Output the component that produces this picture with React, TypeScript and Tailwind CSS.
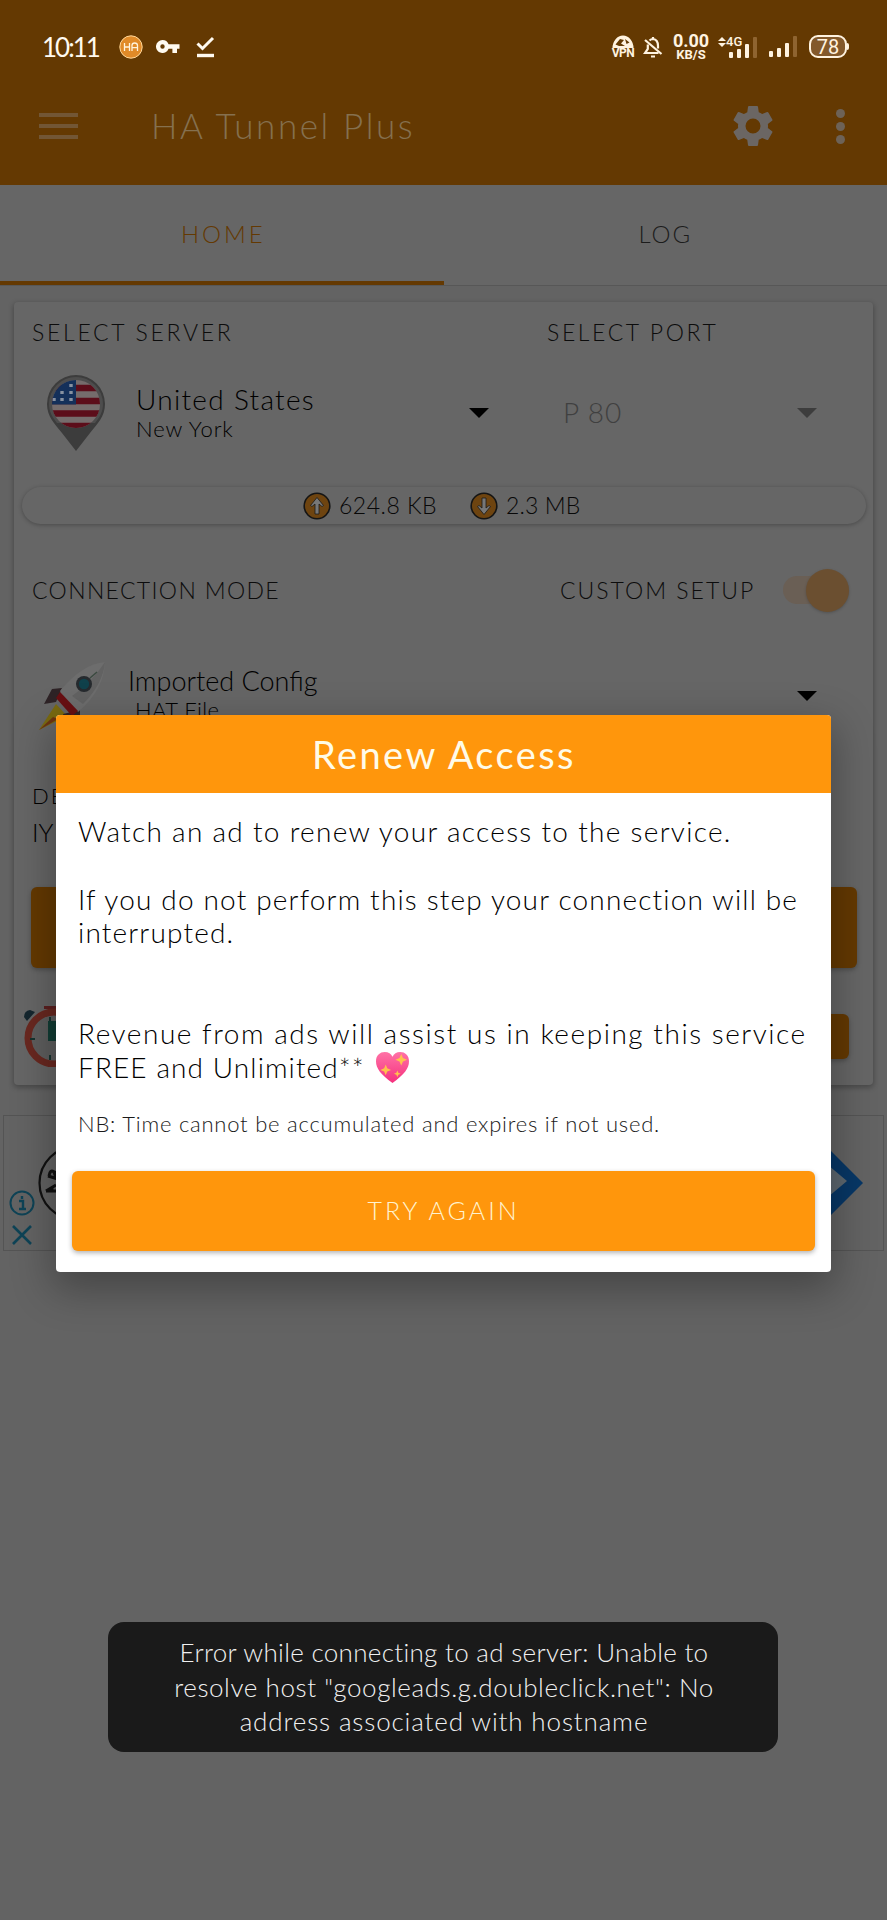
import type { ReactNode } from "react";

function Caret({ className }: { className: string }) {
  return (
    <svg viewBox="0 0 20 10" className={`h-[10px] w-5 ${className}`} fill="currentColor">
      <path d="M0 0h20L10 10z" />
    </svg>
  );
}

function AppBadge() {
  return (
    <svg viewBox="0 0 24 24" className="size-6">
      <circle cx="12" cy="12" r="11.2" fill="#e08a28" stroke="#ffd79a" strokeWidth="1" />
      <path d="M5.500 8v8M10.500 8v8M5.500 12h5M13 16v-5.500q0-2.500 2.700-2.500t2.800 2.500V16M13 12.600h5.500" stroke="#fff3dc" strokeWidth="1.300" fill="none" />
    </svg>
  );
}

function KeyIcon() {
  return (
    <svg viewBox="0 0 24 13" className="h-[13px] w-6" fill="#fffaf0">
      <path fillRule="evenodd" d="M6.500 0a6.500 6.500 0 0 1 6.100 4.300H23.500v4.400H21V13h-4.600V8.700h-3.800A6.500 6.500 0 1 1 6.500 0zm0 4.300a2.200 2.200 0 1 0 0 4.400 2.200 2.200 0 0 0 0-4.400z" />
    </svg>
  );
}

function DoneIcon() {
  return (
    <svg viewBox="0 0 20 22" className="h-[22px] w-5" fill="none" stroke="#fffaf0" strokeWidth="3">
      <path d="M1.500 7.500l5 5L17 2" />
      <path d="M1 19.500h17" strokeWidth="3.400" />
    </svg>
  );
}

function VpnIcon() {
  return (
    <div className="flex w-6 flex-col items-center">
      <svg viewBox="0 0 24 13" className="h-[13px] w-6">
        <path d="M1.500 13a10.500 12.500 0 0 1 21 0" fill="#fff3e0" />
        <path d="M4.500 9.500l4.500-5.500 4 1-3 3.500 4 2.500h-6zM14 4l4.500 3.500-3 1.500z" fill="#643a02" />
      </svg>
      <span className="text-[12px] leading-[11px] font-bold tracking-[-0.500px]">VPN</span>
    </div>
  );
}

function BellOffIcon() {
  return (
    <svg viewBox="0 0 20 22" className="h-[22px] w-5" fill="none" stroke="#fff3e0" strokeWidth="2.200">
      <path d="M6.500 4.500Q8 3 10 3q5 .500 5 7v2.500M4.800 8.500V13L2 17h13.500" />
      <path d="M2 4l16.500 14" />
      <path d="M8 20.500h4M10 1v2" />
    </svg>
  );
}

function Bars({ className }: { className: string }) {
  return (
    <svg viewBox="0 0 28 21" className={className} fill="#fff3e0">
      <rect x="0" y="15" width="4" height="6" rx="1" />
      <rect x="8" y="12" width="4" height="9" rx="1" />
      <rect x="16" y="7" width="4" height="14" rx="1" />
      <rect x="24" y="0" width="4" height="21" rx="1" fill="#8f6430" />
    </svg>
  );
}

function GearIcon() {
  return (
    <svg viewBox="0 0 24 24" className="size-[50px]" fill="#6b6663">
      <path d="M19.140 12.940c.040-.300.060-.610.060-.940 0-.320-.020-.640-.070-.940l2.030-1.580a.49.49 0 0 0 .120-.610l-1.920-3.320a.488.488 0 0 0-.590-.220l-2.390.960c-.500-.380-1.030-.700-1.620-.940l-.360-2.540a.484.484 0 0 0-.480-.410h-3.840c-.240 0-.430.170-.470.410l-.360 2.540c-.590.240-1.130.570-1.620.940l-2.390-.960c-.220-.080-.470 0-.590.220L2.740 8.870c-.120.210-.080.470.120.610l2.030 1.580c-.050.300-.090.630-.090.940s.020.640.070.940l-2.030 1.580a.49.49 0 0 0-.120.610l1.920 3.320c.120.220.370.290.590.220l2.390-.960c.500.380 1.030.700 1.620.940l.360 2.540c.050.240.240.410.480.410h3.840c.240 0 .440-.170.470-.410l.360-2.540c.590-.240 1.130-.560 1.620-.940l2.390.960c.220.080.470 0 .590-.220l1.920-3.320c.120-.220.070-.470-.120-.610l-2.010-1.580zM12 15.600A3.600 3.600 0 1 1 12 8.400a3.600 3.600 0 0 1 0 7.200z" />
    </svg>
  );
}

function FlagPin() {
  return (
    <svg viewBox="0 0 60 78" className="h-[78px] w-[60px]">
      <defs>
        <clipPath id="flag-disc">
          <circle cx="30" cy="30" r="24" />
        </clipPath>
      </defs>
      <path d="M30 1a29 29 0 0 1 29 29c0 13-8 20-15 29L30 77 16 59C9 50 1 43 1 30A29 29 0 0 1 30 1z" fill="#3c3c3c" />
      <path d="M30 3a27 27 0 0 1 27 27c0 8-4 14-8 19H11C7 44 3 38 3 30A27 27 0 0 1 30 3z" fill="#4d4d4d" />
      <g clipPath="url(#flag-disc)">
        <rect width="60" height="60" fill="#756c6c" />
        <path d="M0 14h60M0 27h60M0 39.500h60M0 52h60" stroke="#5c0d1a" strokeWidth="6.500" />
        <rect width="30" height="30.500" fill="#14305a" />
        <path d="M25 10v3M16 17v3M25 17v3M8 24v3M16 24v3M25 24v3" stroke="#8791a0" strokeWidth="3.400" />
      </g>
    </svg>
  );
}

function TransferIcon({ down = false }: { down?: boolean }) {
  return (
    <svg viewBox="0 0 28 28" className={down ? "size-7 rotate-180" : "size-7"}>
      <circle cx="14" cy="14" r="12.800" fill="#6e4410" stroke="#151515" strokeWidth="1.600" />
      <path d="M14 5.500l6.500 8-1.500 1-3-2.500v10h-4V12l-3 2.500-1.500-1z" fill="#777" stroke="#1a1a1a" strokeWidth="0.800" />
    </svg>
  );
}

function Rocket() {
  return (
    <svg viewBox="0 0 70 72" className="h-[72px] w-[70px]">
      <path d="M18 44L1 70l28-14z" fill="#7a6a10" />
      <path d="M1 70l14-13 5 2z" fill="#6e3412" />
      <path d="M24 28L14 29 6 44l12-2zM42 50v9l-15 1-2-6z" fill="#2e2326" />
      <path d="M67 2Q44 4 22 31l18 21Q66 30 67 2z" fill="#6d6d6d" />
      <path d="M67 2q-2 22-22 42L34 36Q54 22 67 2z" fill="#626262" />
      <path d="M22 32l-4 6 16 18 6-5z" fill="#680f12" />
      <circle cx="46" cy="24" r="8" fill="#262a2e" />
      <circle cx="46" cy="24" r="5.200" fill="#10414b" />
      <path d="M52 18l7-6" stroke="#3b4a40" strokeWidth="1.500" />
    </svg>
  );
}

function Stopwatch() {
  return (
    <svg viewBox="0 0 66 62" className="h-[62px] w-[66px]">
      <path d="M2 12q0-6 6-7l5 2-8 9z" fill="#14262e" />
      <path d="M22 1h20v3H22zM30 3h5v5h-5z" fill="#5c2020" />
      <circle cx="32" cy="33" r="26" fill="#5e5e5e" stroke="#692820" strokeWidth="7" />
      <path d="M28 12v5M8 34h5M28 50v5" stroke="#17332f" strokeWidth="2" />
      <path d="M26 16h14v20H26z" fill="#123d35" />
    </svg>
  );
}

function SparkHeart() {
  return (
    <svg viewBox="0 0 36 34" className="h-[33px] w-[35px]">
      <defs>
        <linearGradient id="heart-fill" x1="0" y1="0" x2="0" y2="1">
          <stop offset="0" stopColor="#ff72a6" />
          <stop offset="1" stopColor="#f5307e" />
        </linearGradient>
      </defs>
      <path d="M18 33C6 24 1 18 1 10.500 1 4.500 5 1 10 1c4 0 6.500 2 8 5 1.500-3 4-5 8-5 5 0 9 3.500 9 9.500C35 18 30 24 18 33z" fill="url(#heart-fill)" />
      <path d="M27 3l1.800 4.200L33 9l-4.200 1.800L27 15l-1.800-4.200L21 9l4.200-1.800zM11 14l1.600 3.900 3.900 1.600-3.900 1.600L11 25l-1.600-3.900-3.900-1.600 3.900-1.600zM23 20l1 2.500 2.500 1-2.500 1-1 2.500-1-2.500-2.500-1 2.500-1z" fill="#ffc04d" />
    </svg>
  );
}

function Label({ children, className }: { children: ReactNode; className: string }) {
  return <span className={`text-[23px] leading-7 whitespace-nowrap text-[#0c0c0c] ${className}`}>{children}</span>;
}

function Header() {
  return (
    <header className="h-[185px] bg-[#643902]">
      <div className="flex h-[93px] items-center justify-between pr-[38px] pl-[42px]">
        <div className="flex items-center">
          <span className="w-[77px] text-[26px] leading-none font-normal tracking-[-2px] text-[#fffaf0]">10:11</span>
          <AppBadge />
          <div className="ml-[13px]">
            <KeyIcon />
          </div>
          <div className="ml-4">
            <DoneIcon />
          </div>
        </div>
        <div className="flex items-center font-[Roboto] text-[#fff3e0]">
          <VpnIcon />
          <div className="ml-2">
            <BellOffIcon />
          </div>
          <div className="ml-[9px] flex w-[38px] flex-col items-center font-bold">
            <span className="text-[18px] leading-[15px]">0.00</span>
            <span className="text-[13px] leading-[13px]">KB/S</span>
          </div>
          <div className="ml-2 flex h-[22px] w-[39px] items-start">
            <svg viewBox="0 0 8 10" className="mt-[1px] h-[10px] w-2 shrink-0" fill="#fff3e0">
              <path d="M4 0l4 4H0zM4 10l4-4H0z" />
            </svg>
            <span className="-mt-[1px] w-[3px] shrink-0 text-[13px] leading-[13px] font-medium">4G</span>
            <Bars className="mt-[1px] h-[21px] w-7 shrink-0" />
          </div>
          <Bars className="ml-3 h-[21px] w-[28px]" />
          <div className="ml-3 flex items-center">
            <span className="flex h-[23px] w-[38px] items-center justify-center rounded-[9px] border-2 border-[#fff3e0] bg-[#83592b] text-[20px] leading-none font-normal">
              78
            </span>
            <span className="h-[7px] w-[2px] rounded-r-sm bg-[#fff3e0]" />
          </div>
        </div>
      </div>
      <div className="flex h-[66px] items-center pr-[42px] pl-[39px]">
        <div className="flex w-[39px] flex-col gap-[7px]">
          <span className="h-1 bg-[#725635]" />
          <span className="h-1 bg-[#725635]" />
          <span className="h-1 bg-[#725635]" />
        </div>
        <h1 className="ml-[73px] flex-1 pb-[1px] text-[35px] leading-none tracking-[2.600px] whitespace-nowrap text-[#85704f]">HA Tunnel Plus</h1>
        <GearIcon />
        <div className="ml-[58px] flex flex-col gap-[4px]">
          <span className="size-[9px] rounded-full bg-[#6d6257]" />
          <span className="size-[9px] rounded-full bg-[#6d6257]" />
          <span className="size-[9px] rounded-full bg-[#6d6257]" />
        </div>
      </div>
    </header>
  );
}

function Tabs() {
  return (
    <nav className="grid h-[101px] grid-cols-2 border-b border-[#575757] bg-[#666] text-[24px]">
      <div className="flex items-center justify-center border-b-4 border-[#643902] pt-[1px] pl-[3px] tracking-[2.900px] text-[#643902]">HOME</div>
      <div className="flex items-center justify-center pb-[3px] tracking-[2px] text-[#1c1c1c]">LOG</div>
    </nav>
  );
}

function ServerCard() {
  return (
    <section className="mx-[14px] mt-4 h-[783px] rounded-[4px] bg-[#666] shadow-[0_2px_5px_1px_rgba(0,0,0,0.250)]">
      <div className="flex h-[60px] items-center pl-[18px]">
        <Label className="w-[515px] tracking-[2.700px]">SELECT SERVER</Label>
        <Label className="tracking-[2.600px]">SELECT PORT</Label>
      </div>
      <div className="flex h-[101px] items-center pl-8">
        <FlagPin />
        <div className="ml-[30px] flex w-[333px] flex-col pt-[2px]">
          <span className="text-[28px] leading-[31px] tracking-[1.300px] text-black">United States</span>
          <span className="text-[22px] leading-7 tracking-[0.900px] text-black">New York</span>
        </div>
        <Caret className="text-black" />
        <span className="ml-[74px] w-[234px] pb-[2px] text-[28px] tracking-[0.900px] text-[#404040]">P 80</span>
        <Caret className="text-[#3d3d3d]" />
      </div>
      <div className="mt-6 mr-[7px] ml-2 flex h-[37px] items-center rounded-full bg-[#666] pl-[281px] text-[23px] text-[#080808] shadow-[0_1px_4px_rgba(0,0,0,0.280)]">
        <TransferIcon />
        <span className="ml-2 w-[131px] tracking-[0.500px]">624.8 KB</span>
        <TransferIcon down />
        <span className="ml-2 tracking-[0.100px]">2.3 MB</span>
      </div>
      <div className="mt-9 flex h-[60px] items-center pl-[18px]">
        <Label className="w-[528px] tracking-[1.350px]">CONNECTION MODE</Label>
        <Label className="w-[223px] tracking-[2px]">CUSTOM SETUP</Label>
        <div className="flex h-7 w-[66px] items-center justify-end rounded-full bg-[#6a5f55]">
          <span className="size-[43px] shrink-0 rounded-full bg-[#6b4f30] shadow-[0_1px_3px_rgba(0,0,0,0.200)]" />
        </div>
      </div>
      <div className="mt-[28px] flex h-[96px] items-center pl-6">
        <Rocket />
        <div className="ml-[20px] flex w-[669px] flex-col pb-[2px]">
          <span className="text-[27px] leading-[30px] text-black">Imported Config</span>
          <span className="pl-[7px] text-[22px] leading-7 tracking-[0.400px] text-black">HAT File</span>
        </div>
        <Caret className="text-black" />
      </div>
      <div className="mt-[36px] flex flex-col pl-[18px] text-black">
        <span className="text-[22px] leading-8 tracking-[2px]">DE</span>
        <span className="mt-[4px] text-[25px] leading-8">IY</span>
      </div>
      <div className="mt-[39px] ml-[17px] h-[81px] w-[826px] rounded-[6px] bg-[#643902] shadow-[0_2px_4px_rgba(0,0,0,0.250)]" />
      <div className="mt-[37px] flex h-[62px] items-center justify-between pr-[24px] pl-2">
        <Stopwatch />
        <span className="h-[45px] w-[200px] rounded-[6px] bg-[#643902] shadow-[0_2px_4px_rgba(0,0,0,0.250)]" />
      </div>
    </section>
  );
}

function AdBanner() {
  return (
    <section className="mx-[3px] mt-[30px] flex h-[136px] items-start justify-between border border-[#545454] bg-[#636363]">
      <div className="flex w-[104px]">
        <div className="flex w-[34px] shrink-0 flex-col items-center gap-[9px] pt-[74px] pl-[2px]">
          <svg viewBox="0 0 26 26" className="size-[26px]" fill="none" stroke="#0e4356">
            <circle cx="13" cy="13" r="11.500" strokeWidth="2" />
            <path d="M10 11h4v8M10 19h7M13 6v3" strokeWidth="2.400" />
          </svg>
          <svg viewBox="0 0 22 20" className="h-5 w-[22px]" fill="none" stroke="#0e4356" strokeWidth="2.600">
            <path d="M2 1l18 18M20 1L2 19" />
          </svg>
        </div>
        <svg viewBox="0 0 76 76" className="mt-[29px] size-[76px] shrink-0" fill="none" stroke="#111">
          <circle cx="38" cy="38" r="36.500" strokeWidth="2.200" />
          <path d="M8 46l10-6M8 46l12 0M14 42v5M10 31l10 3M11 31q1-7 5-4l2 6M16 27l5 2" strokeWidth="3" />
        </svg>
      </div>
      <svg viewBox="0 0 70 70" className="mt-[32px] mr-[20px] size-[70px]">
        <path d="M35 0l35 35-35 35L0 35z" fill="#073766" />
        <path d="M35 17l19 16-19 16z" fill="#5e6870" />
      </svg>
    </section>
  );
}

function RenewDialog() {
  return (
    <div
      role="dialog"
      className="absolute top-[715px] left-[56px] flex h-[557px] w-[775px] flex-col overflow-hidden rounded-[4px] bg-white shadow-[0_14px_40px_4px_rgba(0,0,0,0.300)]"
    >
      <h2 className="flex h-[78px] shrink-0 items-center justify-center bg-[#ff960c] pl-[1px] text-[38px] leading-none font-normal tracking-[2.400px] text-[#fffbe8]">
        Renew Access
      </h2>
      <div className="px-[22px] pt-[22px] text-[28px] leading-[33.700px] whitespace-nowrap text-black">
        <p className="tracking-[1.300px]">Watch an ad to renew your access to the service.</p>
        <p className="mt-[34px] tracking-[1.170px]">
          If you do not perform this step your connection will be
          <br />
          interrupted.
        </p>
        <p className="mt-[67px] tracking-[1.540px]">Revenue from ads will assist us in keeping this service</p>
        <p className="flex items-center tracking-[1.100px]">
          FREE and Unlimited**
          <span className="ml-[10px]">
            <SparkHeart />
          </span>
        </p>
        <p className="mt-[22px] text-[22px] leading-[34px] tracking-[0.780px] text-[#1a1a1a]">NB: Time cannot be accumulated and expires if not used.</p>
      </div>
      <button className="mt-auto mr-4 mb-[21px] ml-4 h-[80px] shrink-0 rounded-[6px] bg-[#ff960c] text-[25px] tracking-[3px] text-[#fff3cf] shadow-[0_2px_5px_rgba(0,0,0,0.300)]">
        TRY AGAIN
      </button>
    </div>
  );
}

function Toast() {
  return (
    <div className="absolute top-[1622px] left-[108px] flex h-[130px] w-[670px] flex-col items-center justify-center rounded-[16px] bg-[#1a1a1a] pl-[2px] text-[26px] leading-[34.500px] whitespace-nowrap text-[#f0f0f0]">
      <span className="tracking-[0.300px]">Error while connecting to ad server: Unable to</span>
      <span className="tracking-[0.580px]">resolve host "googleads.g.doubleclick.net": No</span>
      <span className="tracking-[0.850px]">address associated with hostname</span>
    </div>
  );
}

export default function App() {
  return (
    <main className="relative h-[1920px] w-[887px] overflow-hidden bg-[#636363] font-['Lato',sans-serif] font-light">
      <Header />
      <Tabs />
      <ServerCard />
      <AdBanner />
      <RenewDialog />
      <Toast />
    </main>
  );
}
